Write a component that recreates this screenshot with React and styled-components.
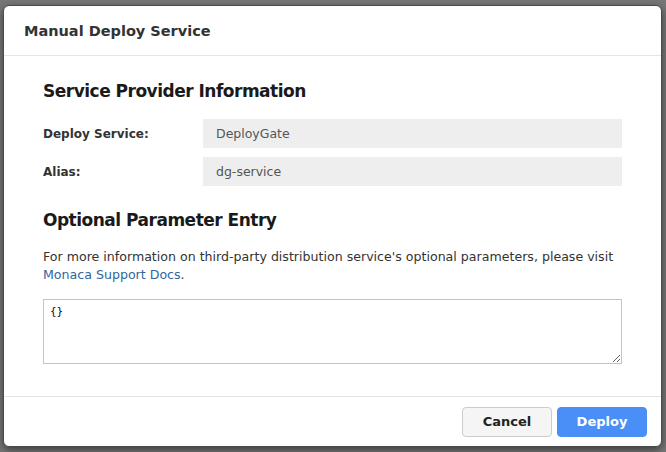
import React from 'react';
import styled, { createGlobalStyle } from 'styled-components';

const GlobalStyle = createGlobalStyle`
  html, body {
    margin: 0;
    padding: 0;
    background: #777777;
  }
  body {
    font-family: "DejaVu Sans", "Liberation Sans", sans-serif;
    color: #333333;
  }
`;

const App = () => {
  return (
    <Backdrop>
      <GlobalStyle />
      <Dialog>
        <Header>
          <HeaderTitle>Manual Deploy Service</HeaderTitle>
        </Header>
        <Body>
          <SectionTitle>Service Provider Information</SectionTitle>
          <FieldRow>
            <FieldLabel>Deploy Service:</FieldLabel>
            <ReadOnlyValue>DeployGate</ReadOnlyValue>
          </FieldRow>
          <FieldRow>
            <FieldLabel>Alias:</FieldLabel>
            <ReadOnlyValue>dg-service</ReadOnlyValue>
          </FieldRow>
          <SectionTitle second>Optional Parameter Entry</SectionTitle>
          <Note>
            For more information on third-party distribution service's optional
            parameters, please visit <DocLink href="#">Monaca Support Docs</DocLink>.
          </Note>
          <ParamsArea defaultValue="{}" spellCheck={false} />
        </Body>
        <Footer>
          <Button>Cancel</Button>
          <Button primary>Deploy</Button>
        </Footer>
      </Dialog>
    </Backdrop>
  );
};

export default App;

const Backdrop = styled.div`
  width: 666px;
  height: 452px;
  box-sizing: border-box;
  padding: 5px 4px 5px 3px;
  background: #777777;
  overflow: hidden;
`;

const Dialog = styled.div`
  width: 659px;
  height: 442px;
  box-sizing: border-box;
  background: #ffffff;
  border: 1px solid #4a4a4a;
  border-radius: 6px;
  box-shadow: 0 3px 9px rgba(0, 0, 0, 0.5);
  display: flex;
  flex-direction: column;
`;

const Header = styled.div`
  height: 49px;
  flex: none;
  display: flex;
  align-items: center;
  padding: 0 20px;
  border-bottom: 1px solid #e5e5e5;
`;

const HeaderTitle = styled.div`
  font-size: 14.5px;
  font-weight: bold;
  color: #333333;
`;

const Body = styled.div`
  flex: 1;
  padding: 24px 39px 0 39px;
`;

const SectionTitle = styled.div`
  font-size: 17px;
  letter-spacing: -0.5px;
  line-height: 22px;
  font-weight: bold;
  color: #1a1a1a;
  margin: ${p => (p.second ? '23px 0 17px' : '0 0 17px')};
`;

const FieldRow = styled.div`
  display: flex;
  align-items: center;
  margin-bottom: 9px;
`;

const FieldLabel = styled.div`
  width: 160px;
  font-size: 12px;
  font-weight: bold;
  color: #333333;
`;

const ReadOnlyValue = styled.div`
  flex: 1;
  height: 29px;
  box-sizing: border-box;
  padding: 0 13px;
  display: flex;
  align-items: center;
  background: #eeeeee;
  font-size: 12.5px;
  color: #555555;
`;

const Note = styled.p`
  margin: 0 0 15px;
  font-size: 12.6px;
  line-height: 18px;
  color: #333333;
`;

const DocLink = styled.a`
  color: #2f67a0;
  text-decoration: none;
`;

const ParamsArea = styled.textarea`
  display: block;
  width: 100%;
  height: 65px;
  box-sizing: border-box;
  margin: 0;
  padding: 5px 6px;
  border: 1px solid #c4c4c4;
  border-radius: 0;
  font-family: "DejaVu Sans Mono", "Liberation Mono", monospace;
  font-size: 11px;
  color: #111111;
  resize: vertical;
  outline: none;
`;

const Footer = styled.div`
  height: 49px;
  flex: none;
  border-top: 1px solid #e5e5e5;
  display: flex;
  justify-content: flex-end;
  align-items: center;
  gap: 5px;
  padding: 0 14px;
`;

const Button = styled.button`
  width: 90px;
  height: 30px;
  box-sizing: border-box;
  border-radius: 4px;
  border: 1px solid ${p => (p.primary ? '#4a8ff7' : '#cccccc')};
  background: ${p => (p.primary ? '#4a8ff7' : '#f5f5f5')};
  color: ${p => (p.primary ? '#ffffff' : '#222222')};
  font-family: "DejaVu Sans", "Liberation Sans", sans-serif;
  font-size: 13px;
  font-weight: bold;
  cursor: pointer;
`;
